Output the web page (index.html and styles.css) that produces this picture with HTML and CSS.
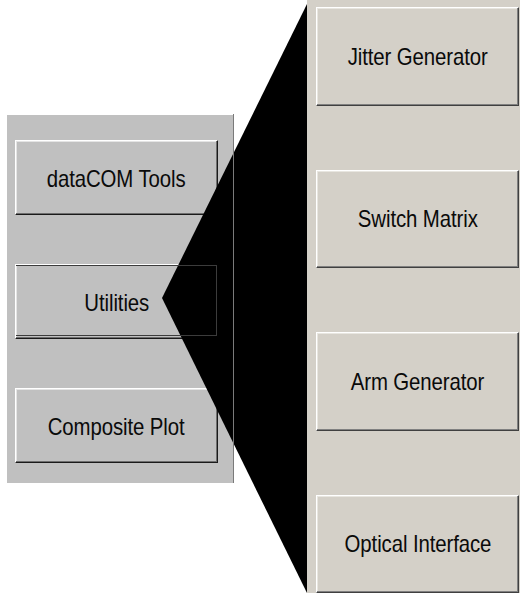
FILE: index.html
```html
<!DOCTYPE html>
<html>
<head>
<meta charset="utf-8">
<link rel="stylesheet" href="styles.css">
</head>
<body>
<div class="page">
  <div class="left-area">
    <div class="panel">
      <div class="btn btn-left"><span class="label">dataCOM Tools</span></div>
      <div class="btn btn-left btn-focus"><span class="label">Utilities</span></div>
      <div class="btn btn-left"><span class="label">Composite Plot</span></div>
    </div>
  </div>
  <div class="right-panel">
    <div class="btn btn-right"><span class="label">Jitter Generator</span></div>
    <div class="btn btn-right"><span class="label">Switch Matrix</span></div>
    <div class="btn btn-right"><span class="label">Arm Generator</span></div>
    <div class="btn btn-right"><span class="label">Optical Interface</span></div>
  </div>
  <svg class="wedge" width="520" height="593" viewBox="0 0 520 593">
    <polygon points="307,4 162,298 307,593" fill="#000"/>
  </svg>
</div>
</body>
</html>
```
FILE: styles.css
```css
html, body {
  margin: 0;
  padding: 0;
  background: #ffffff;
}
.page {
  position: relative;
  width: 520px;
  height: 593px;
  display: flex;
  flex-direction: row;
  overflow: hidden;
  font-family: "Liberation Sans", Arial, sans-serif;
  color: #0a0a0a;
}
.left-area {
  padding-top: 115px;
  padding-left: 7px;
}
.panel {
  position: relative;
  width: 226px;
  height: 368px;
  background: #c0c0c0;
  padding: 25px 0 0 8px;
  box-sizing: border-box;
  display: flex;
  flex-direction: column;
  gap: 49px;
}
.panel::after {
  content: "";
  position: absolute;
  top: -1px;
  right: -1px;
  bottom: 0;
  width: 1px;
  background: #7a7a7a;
  z-index: 2;
}
.btn {
  box-sizing: border-box;
  display: flex;
  align-items: center;
  justify-content: center;
  font-size: 20px;
  border-top: 1px solid #ffffff;
  border-left: 1px solid #ffffff;
  border-right: 1px solid #1a1a1a;
  border-bottom: 1px solid #1a1a1a;
  box-shadow: inset -1px -1px #6e6e6e, inset 1px 1px #e4e4e4;
}
.label {
  display: inline-block;
  transform: scale(1.02, 1.18);
  letter-spacing: -0.1px;
}
.btn-left {
  width: 203px;
  height: 75px;
  background: #c0c0c0;
  padding-top: 3px;
}
.btn-focus {
  position: relative;
  height: 75px;
}
.btn-focus::after {
  content: "";
  position: absolute;
  left: 0;
  top: 0;
  right: 0;
  bottom: 2px;
  border-top: 1px solid #3c3c3c;
  border-right: 1px solid #3c3c3c;
  border-bottom: 1px solid #3c3c3c;
  z-index: 2;
}
.right-panel {
  margin-left: auto;
  width: 213px;
  height: 593px;
  background: #d4d0c8;
  box-sizing: border-box;
  padding: 7px 0 0 9px;
  display: flex;
  flex-direction: column;
  gap: 64px;
}
.btn-right {
  width: 203px;
  height: 99px;
  background: #d4d0c8;
  border-right-color: #404040;
  border-bottom-color: #404040;
  box-shadow: inset -1px -1px #808080, inset 1px 1px #e8e6e0;
  padding-top: 2px;
}
.wedge {
  position: absolute;
  left: 0;
  top: 0;
  z-index: 1;
  pointer-events: none;
}
```
